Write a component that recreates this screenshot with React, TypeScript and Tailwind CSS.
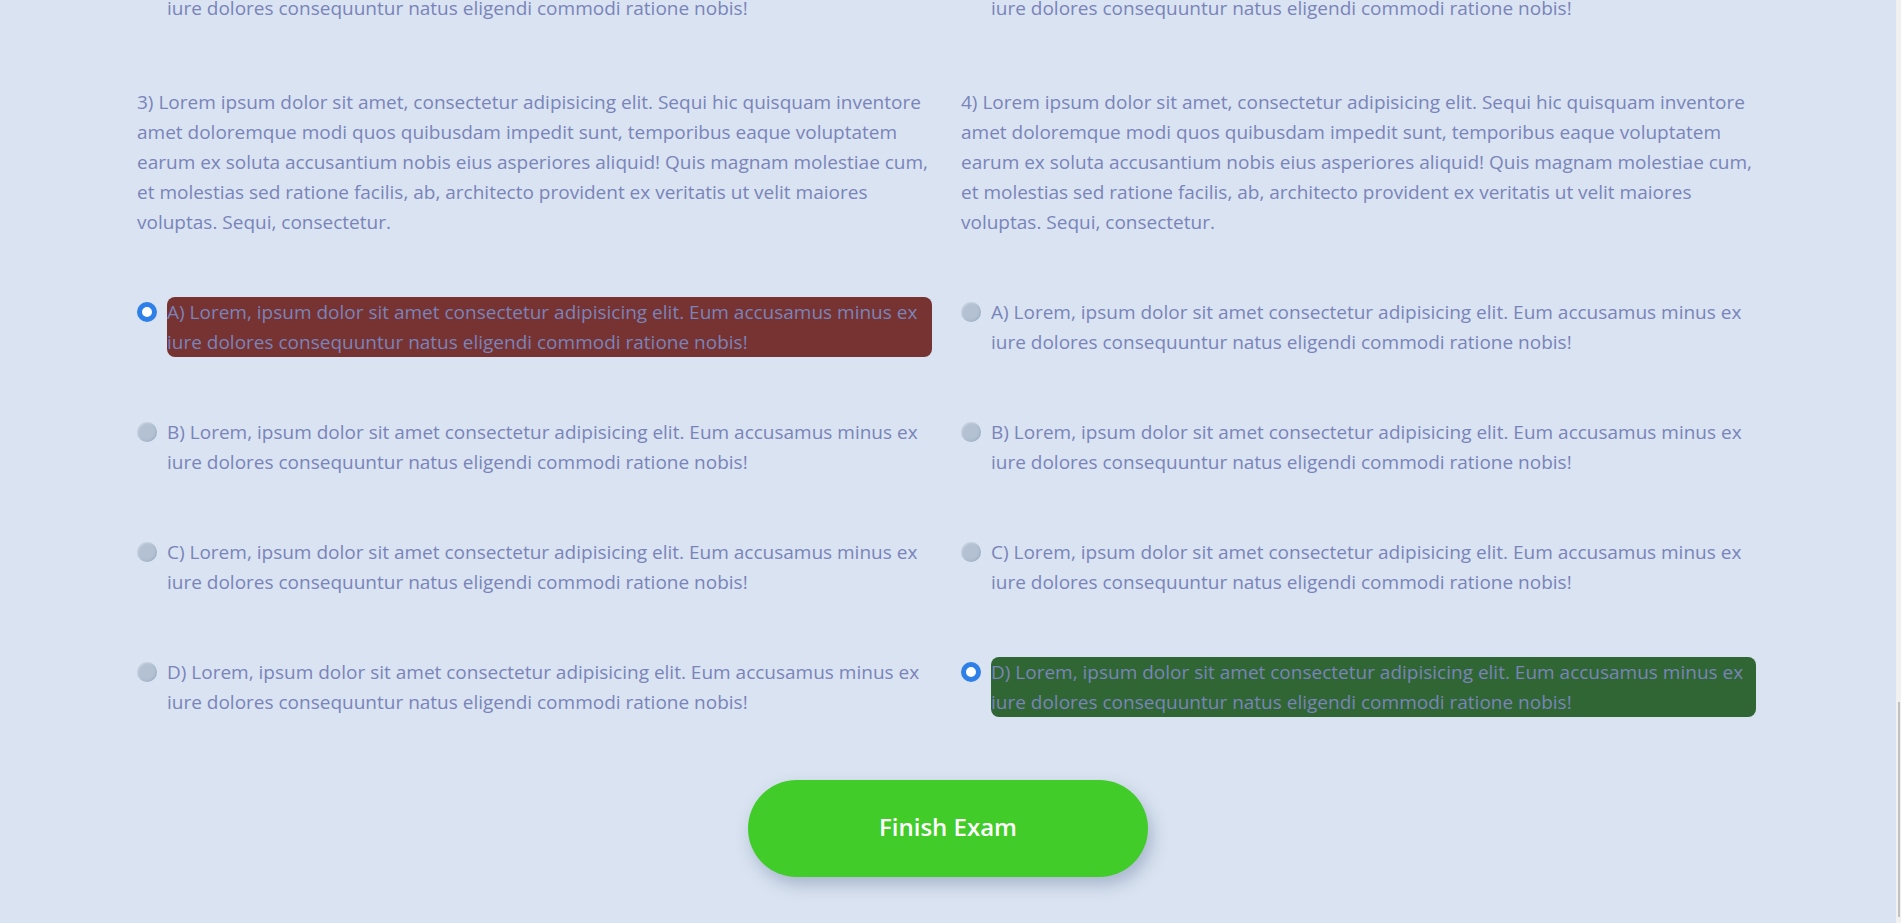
import React from "react";

type Q = {
  n: number;
  selected: number;
  correct: number;
};

const QUESTION_TEXT =
  "Lorem ipsum dolor sit amet, consectetur adipisicing elit. Sequi hic quisquam inventore amet doloremque modi quos quibusdam impedit sunt, temporibus eaque voluptatem earum ex soluta accusantium nobis eius asperiores aliquid! Quis magnam molestiae cum, et molestias sed ratione facilis, ab, architecto provident ex veritatis ut velit maiores voluptas. Sequi, consectetur.";

const OPTION_TEXT =
  "Lorem, ipsum dolor sit amet consectetur adipisicing elit. Eum accusamus minus ex iure dolores consequuntur natus eligendi commodi ratione nobis!";

const LETTERS = ["A", "B", "C", "D"];

const questions: Q[] = [
  { n: 3, selected: 0, correct: 2 },
  { n: 4, selected: 3, correct: 3 },
];

function Radio({ checked }: { checked: boolean }) {
  return checked ? (
    <span className="mt-[5px] block h-[20px] w-[20px] shrink-0 rounded-full border-[5px] border-[#2f7fe9] bg-white" />
  ) : (
    <span className="mt-[5px] block h-[20px] w-[20px] shrink-0 rounded-full bg-[#b3c1d3] shadow-[inset_1px_1px_2px_rgba(255,255,255,0.35),inset_-1px_-1px_2px_rgba(120,140,170,0.35)]" />
  );
}

function Option({ letter, selected, correct }: { letter: string; selected: boolean; correct: boolean }) {
  const bg = selected ? (correct ? "bg-[#2f6633]" : "bg-[#773232]") : "";
  const text = `${letter}) ${OPTION_TEXT}`;
  return (
    <label className="flex cursor-pointer items-start gap-[10px]">
      <Radio checked={selected} />
      <span className={`block h-[60px] flex-1 rounded-[8px] leading-[30px] ${bg}`}>{text}</span>
    </label>
  );
}

function Question({ q }: { q: Q }) {
  const text = `${q.n}) ${QUESTION_TEXT}`;
  return (
    <div className="flex flex-col">
      <p className="leading-[30px]">{text}</p>
      <div className="mt-[60px] flex flex-col gap-[60px]">
        {LETTERS.map((l, i) => (
          <Option key={l} letter={l} selected={q.selected === i} correct={q.selected === q.correct} />
        ))}
      </div>
    </div>
  );
}

export default function App() {
  return (
    <div
      className="flex h-screen overflow-hidden bg-[#d9e3f1] text-[19px] text-[#7a84b9]"
      style={{ fontFamily: "'Open Sans', 'Noto Sans', sans-serif" }}
    >
      <div className="flex min-w-0 flex-1 flex-col justify-end overflow-hidden">
        {/* tail of the previous questions (scrolled past) */}
        <div className="grid shrink-0 grid-cols-[795px_795px] gap-x-[29px] px-[137px]">
          <Option letter="D" selected={false} correct={false} />
          <Option letter="D" selected={false} correct={false} />
        </div>
        <main className="mt-[64px] grid shrink-0 grid-cols-[795px_795px] gap-x-[29px] px-[137px]">
          {questions.map((q) => (
            <Question key={q.n} q={q} />
          ))}
        </main>
        <div className="flex shrink-0 justify-center pb-[46px] pt-[63px]">
          <button className="h-[97px] w-[400px] rounded-full bg-[#41cc2a] pb-[4px] text-[24px] font-semibold text-white shadow-[4px_8px_16px_rgba(80,100,140,0.35)]">
            Finish Exam
          </button>
        </div>
      </div>
      {/* scrollbar */}
      <div className="flex w-[5px] shrink-0 flex-col bg-[#f1f1f1] pt-[702px]">
        <div className="ml-[2px] h-[215px] w-[2px] bg-[#c1c1c1]" />
      </div>
    </div>
  );
}
